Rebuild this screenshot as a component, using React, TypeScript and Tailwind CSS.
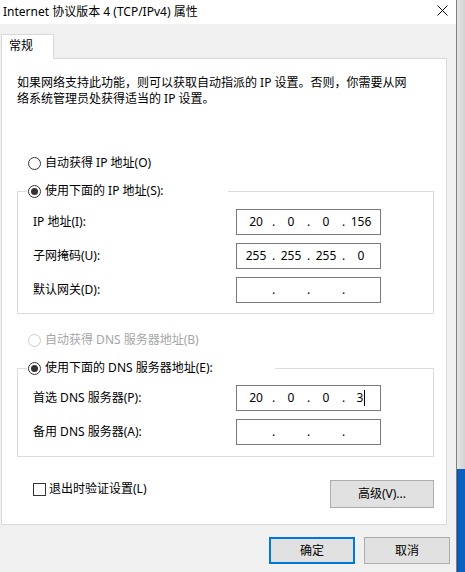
import { Fragment } from 'react'

const font = "font-['Noto_Sans','Noto_Sans_CJK_SC',sans-serif]"

function Radio({ checked, disabled }: { checked?: boolean; disabled?: boolean }) {
  return (
    <span
      className={`flex h-[13px] w-[13px] shrink-0 items-center justify-center rounded-full border bg-white ${
        disabled ? 'border-[#cccccc]' : 'border-[#333333]'
      }`}
    >
      {checked && <span className="h-[7px] w-[7px] rounded-full bg-[#333333]" />}
    </span>
  )
}

function IpField({ parts, caret }: { parts: string[]; caret?: boolean }) {
  return (
    <div className="flex h-[26px] w-[145px] items-center border border-[#7a7a7a] bg-white pl-[4px]">
      {parts.map((p, i) => (
        <Fragment key={i}>
          {i > 0 && <span className="w-[5px] text-center">.</span>}
          <span className="flex w-[30px] items-center justify-center">
            {p}
            {caret && i === parts.length - 1 && (
              <span className="ml-px inline-block h-[16px] w-px bg-black" />
            )}
          </span>
        </Fragment>
      ))}
    </div>
  )
}

function Row({ label, parts, caret }: { label: string; parts: string[]; caret?: boolean }) {
  return (
    <div className="flex h-[26px] items-center">
      <span className="w-[203px]">{label}</span>
      <IpField parts={parts} caret={caret} />
    </div>
  )
}

export default function App() {
  return (
    <div className={`flex h-[572px] w-[465px] overflow-hidden text-[12px] leading-[16px] text-black ${font}`}>
      {/* Dialog window */}
      <div className="flex w-[457px] flex-col border-r border-[#808080] bg-[#f0f0f0]">
        {/* Title bar */}
        <div className="flex h-[24px] items-center justify-between bg-white pl-[3px] pr-[8px]">
          <span>Internet 协议版本 4 (TCP/IPv4) 属性</span>
          <svg width="11" height="11" viewBox="0 0 11 11" className="self-start mt-[5px]">
            <path d="M0.5 0.5 L10.5 10.5 M10.5 0.5 L0.5 10.5" stroke="#000" strokeWidth="1" />
          </svg>
        </div>

        <div className="flex flex-col pl-[1px]">
          {/* Tab */}
          <div className="mt-[10px] flex">
            <div className="relative z-10 -mb-px h-[25px] w-[53px] border border-b-0 border-[#d9d9d9] bg-white pl-[7px] pt-[3px]">
              常规
            </div>
          </div>

          {/* Tab panel */}
          <div className="flex h-[467px] w-[446px] flex-col border border-[#d9d9d9] bg-white">
            <p className="ml-[15px] mt-[16px]">
              如果网络支持此功能，则可以获取自动指派的 IP 设置。否则，你需要从网
              <br />
              络系统管理员处获得适当的 IP 设置。
            </p>

            <label className="ml-[26px] mt-[48px] flex h-[16px] items-center gap-[4px]">
              <Radio />
              <span>自动获得 IP 地址(O)</span>
            </label>

            <fieldset className="ml-[15px] mt-[12px] w-[417px] border border-[#dcdcdc]">
              <legend className="ml-[9px] flex h-[16px] w-[201px] items-center gap-[4px] pl-px">
                <Radio checked />
                <span>使用下面的 IP 地址(S):</span>
              </legend>
              <div className="flex flex-col gap-[8px] pb-[10px] pl-[15px] pt-[10px]">
                <Row label="IP 地址(I):" parts={['20', '0', '0', '156']} />
                <Row label="子网掩码(U):" parts={['255', '255', '255', '0']} />
                <Row label="默认网关(D):" parts={['', '', '', '']} />
              </div>
            </fieldset>

            <label className="ml-[26px] mt-[18px] flex h-[16px] items-center gap-[4px] text-[#a6a6a6]">
              <Radio disabled />
              <span>自动获得 DNS 服务器地址(B)</span>
            </label>

            <fieldset className="ml-[15px] mt-[12px] w-[417px] border border-[#dcdcdc]">
              <legend className="ml-[9px] flex h-[16px] w-[248px] items-center gap-[4px] pl-px">
                <Radio checked />
                <span>使用下面的 DNS 服务器地址(E):</span>
              </legend>
              <div className="flex flex-col gap-[8px] pb-[11px] pl-[15px] pt-[9px]">
                <Row label="首选 DNS 服务器(P):" parts={['20', '0', '0', '3']} caret />
                <Row label="备用 DNS 服务器(A):" parts={['', '', '', '']} />
              </div>
            </fieldset>

            <div className="ml-[31px] mt-[23px] flex w-[401px] items-start justify-between">
              <label className="mt-px flex h-[16px] items-center gap-[3px]">
                <span className="h-[13px] w-[13px] border border-[#333333] bg-white" />
                <span>退出时验证设置(L)</span>
              </label>
              <button className="h-[28px] w-[104px] border border-[#adadad] bg-[#e1e1e1]">高级(V)...</button>
            </div>
          </div>
        </div>

        {/* Dialog buttons */}
        <div className="mt-[12px] flex justify-end gap-[9px] pr-[6px]">
          <button className="h-[27px] w-[86px] border-2 border-[#0078d7] bg-[#e1e1e1]">确定</button>
          <button className="h-[27px] w-[86px] border border-[#adadad] bg-[#e1e1e1]">取消</button>
        </div>
      </div>

      {/* Desktop behind the dialog */}
      <div className="flex w-[8px] flex-col">
        <div className="h-[469px] bg-linear-to-r from-[#e4e4e4] to-[#d2d2d2]" />
        <div className="flex-1 border-l border-[#0a4f9c] bg-[#0b5fbf]" />
      </div>
    </div>
  )
}
